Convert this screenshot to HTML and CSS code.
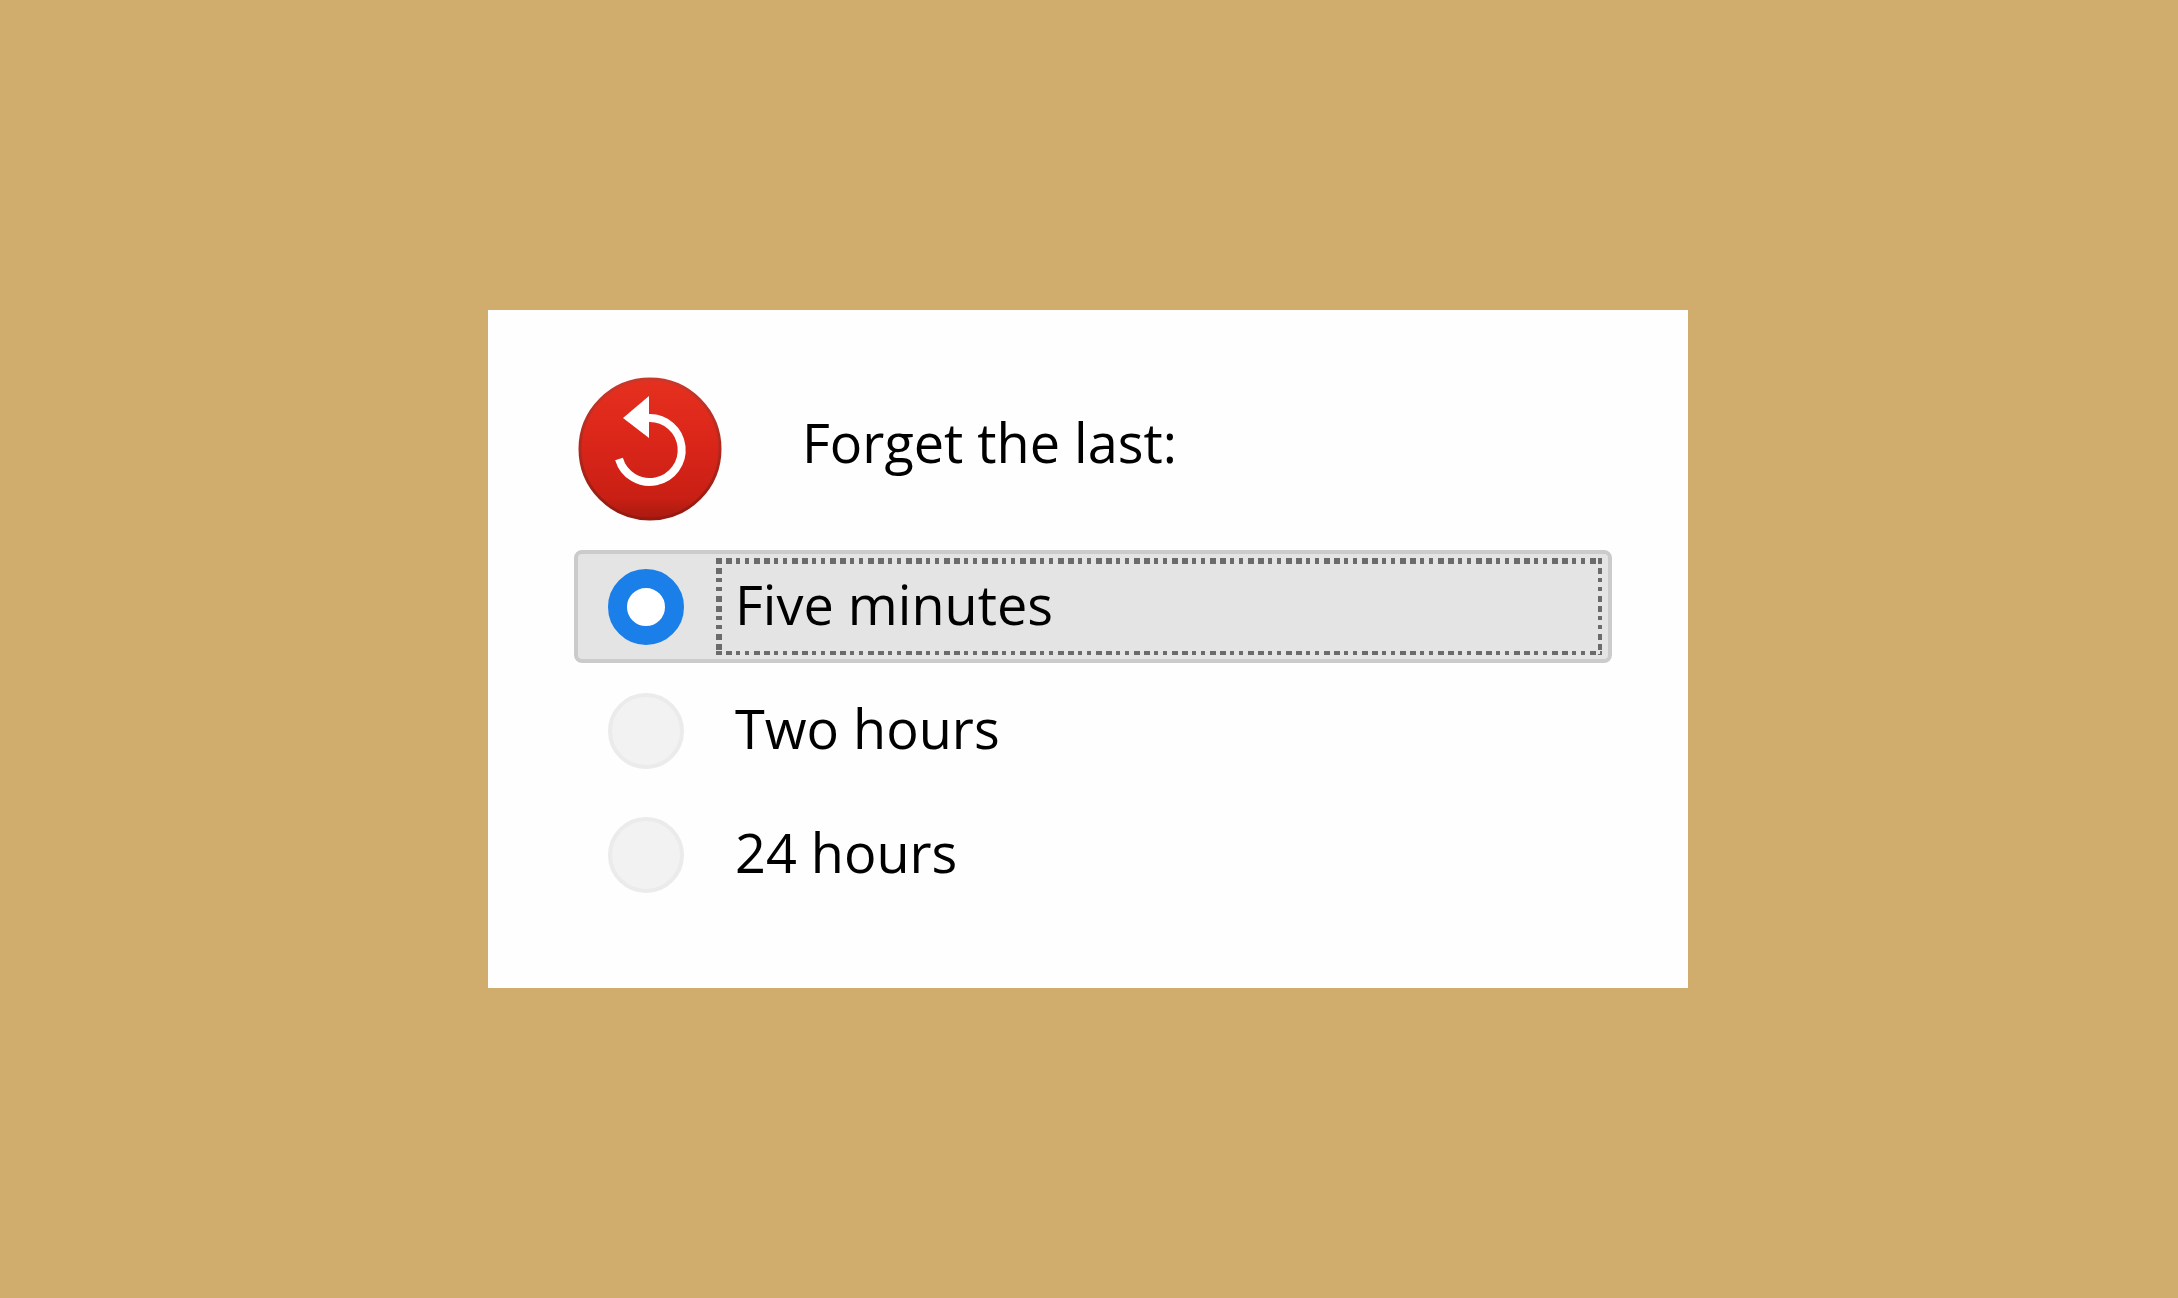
FILE: index.html
```html
<!DOCTYPE html>
<html lang="en">
<head>
<meta charset="utf-8">
<title>Forget</title>
<link rel="stylesheet" href="styles.css">
</head>
<body>
<form class="panel">
  <header class="panel-header">
    <svg class="forget-icon" viewBox="0 0 144 144" aria-hidden="true">
      <defs>
        <linearGradient id="disc" x1="0" y1="0" x2="0" y2="1">
          <stop offset="0" stop-color="#e6301f"/>
          <stop offset="0.5" stop-color="#d92519"/>
          <stop offset="0.85" stop-color="#c91f14"/>
          <stop offset="1" stop-color="#a81a10"/>
        </linearGradient>
        <linearGradient id="rim" x1="0" y1="0" x2="0" y2="1">
          <stop offset="0" stop-color="#c8392c"/>
          <stop offset="1" stop-color="#96180f"/>
        </linearGradient>
      </defs>
      <circle cx="72" cy="72" r="70" fill="url(#disc)" stroke="url(#rim)" stroke-width="3"/>
      <path d="M41 82A32 32 0 1 0 71 41" fill="none" stroke="#fff" stroke-width="8"/>
      <path d="M45 41L71 19V61Z" fill="#fff"/>
    </svg>
    <h1 class="title" id="title">Forget the last:</h1>
  </header>
  <div class="options" role="radiogroup" aria-labelledby="title">
    <label class="option">
      <input class="radio" type="radio" name="timespan" value="5m" checked>
      <span class="option-text">Five minutes</span>
    </label>
    <label class="option">
      <input class="radio" type="radio" name="timespan" value="2h">
      <span class="option-text">Two hours</span>
    </label>
    <label class="option">
      <input class="radio" type="radio" name="timespan" value="24h">
      <span class="option-text">24 hours</span>
    </label>
  </div>
</form>
</body>
</html>
```
FILE: styles.css
```css
* {
  box-sizing: border-box;
}

body {
  margin: 0;
  min-height: 100vh;
  padding-right: 2px;
  display: grid;
  place-items: center;
  background: #d1ad6d;
  color: #000;
  font-family: "Open Sans", "Noto Sans", sans-serif;
  font-size: 54px;
}

.panel {
  width: min(1200px, 100%);
  padding: 67px 76px 77px 86px;
  background: #fefefe;
}

.panel-header {
  display: flex;
  align-items: flex-start;
  gap: 80px;
  margin-bottom: 29px;
  padding-left: 4px;
}

.forget-icon {
  flex: none;
  width: 144px;
  height: 144px;
}

.title {
  margin: 0;
  font-size: 54px;
  font-weight: 400;
  line-height: 130px;
}

.options {
  display: grid;
  gap: 11px;
}

.option {
  display: flex;
  align-items: center;
  gap: 32px;
  padding: 4px 6px 4px 30px;
  border: 4px solid transparent;
  border-radius: 8px;
}

.option:has(:checked) {
  border-color: #cbcbcb;
  background: #e4e4e4;
}

.radio {
  appearance: none;
  flex: none;
  width: 76px;
  height: 76px;
  margin: 0;
  border: 4px solid #ebebeb;
  border-radius: 50%;
  background: #f2f2f2;
}

.radio:checked {
  border: 19px solid #1a7fe8;
  background: #fff;
}

.radio:focus {
  outline: none;
}

.option-text {
  flex: 1;
  padding: 0 0 4px 19px;
  line-height: 93px;
}

/* Square-dotted focus rectangle, one gradient per edge */
.radio:checked + .option-text {
  --dots: #6b6b6b 0 6px, transparent 6px 10px, #6b6b6b 10px 16px, transparent 16px 20px,
    #6b6b6b 20px 24px, transparent 24px 29px, #6b6b6b 29px 33px, transparent 33px 38px;
  background:
    repeating-linear-gradient(to right, var(--dots)) top / 100% 6px no-repeat,
    repeating-linear-gradient(to right, var(--dots)) bottom / 100% 4px no-repeat,
    repeating-linear-gradient(to bottom, var(--dots)) left / 6px 100% no-repeat,
    repeating-linear-gradient(to bottom, var(--dots)) right / 4px 100% no-repeat;
}
```
